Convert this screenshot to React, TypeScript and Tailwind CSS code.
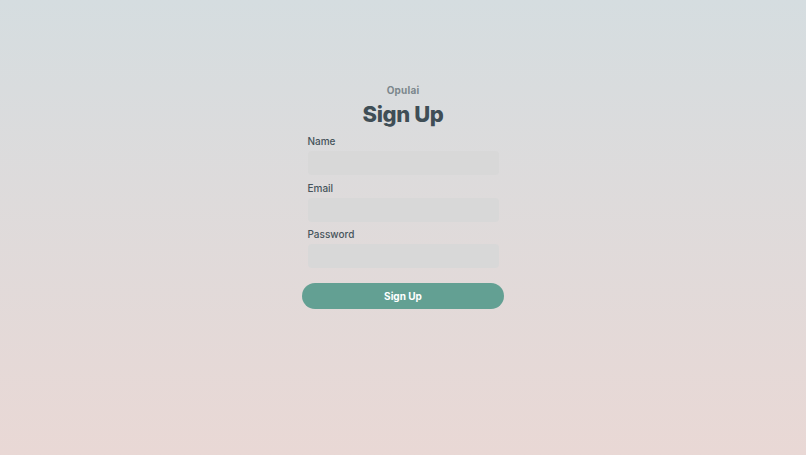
import React from "react";

const fields = [
    { label: "Name", type: "text" },
    { label: "Email", type: "email" },
    { label: "Password", type: "password" },
];

export default function App() {
    return (
        <div className="min-h-[455px] w-full bg-gradient-to-b from-[#d5dde0] to-[#e9d8d5] flex justify-center font-['Inter',sans-serif]">
            <div className="w-[202px] pt-[84px] flex flex-col items-center">
                <p className="text-[10px] leading-[13px] font-bold text-[#7b878c] tracking-[0.2px]">Opulai</p>
                <h1 className="mt-[3px] text-[22px] leading-[28px] font-extrabold text-[#3f4e56] tracking-[-0.4px]">Sign Up</h1>

                <form className="mt-[7px] w-[191px] flex flex-col gap-[6.5px]" onSubmit={(e) => e.preventDefault()}>
                    {fields.map((field, index) => (
                        <div key={index} className="flex flex-col">
                            <label className="text-[10px] leading-[13px] font-medium text-[#46545b] mb-[3px]">{field.label}</label>
                            <input
                                type={field.type}
                                className="h-[24px] w-full rounded-[4px] bg-[#d8d8d8] outline-none px-2 text-[10px]"
                            />
                        </div>
                    ))}
                </form>

                <button className="mt-[15px] w-[202px] h-[26px] rounded-full bg-[#63a093] text-white text-[10px] font-bold">
                    Sign Up
                </button>
            </div>
        </div>
    );
}
